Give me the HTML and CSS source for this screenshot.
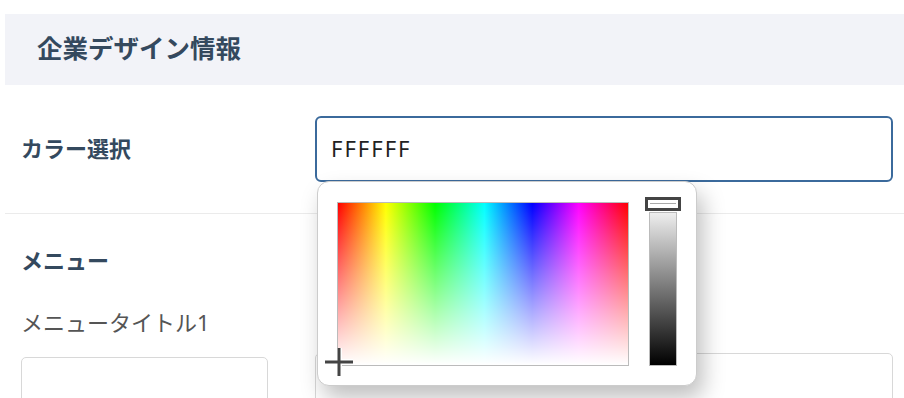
FILE: index.html
```html
<!DOCTYPE html>
<html lang="ja">
<head>
	<meta charset="UTF-8">
	<meta name="viewport" content="width=device-width, initial-scale=1">
	<title>企業デザイン情報</title>
	<link rel="stylesheet" href="styles.css">
</head>
<body>
	<section class="panel">
		<h2 class="panel__title">企業デザイン情報</h2>

		<div class="row">
			<label class="row__label" for="color">カラー選択</label>
			<div class="picker">
				<input class="picker__input" id="color" type="text" value="FFFFFF">

				<div class="picker__pop">
					<div class="picker__area">
						<svg class="picker__cross" width="34" height="34" viewBox="0 0 34 34">
							<path d="M3 17H31M17 3V31" stroke="#fff" stroke-width="6"/>
							<path d="M3 17H31M17 3V31" stroke="#444" stroke-width="3"/>
						</svg>
					</div>
					<div class="picker__slider">
						<div class="picker__handle"></div>
					</div>
				</div>
			</div>
		</div>

		<div class="menu">
			<h3 class="menu__title">メニュー</h3>
			<div class="menu__grid">
				<div class="field">
					<label class="field__label">メニュータイトル1</label>
					<input class="field__input" type="text">
				</div>
				<div class="field field--right">
					<label class="field__label">メニューリンク1</label>
					<input class="field__input" type="text">
				</div>
			</div>
		</div>
	</section>
</body>
</html>
```

FILE: styles.css
```css
body {
	font-family: "Noto Sans", "Noto Sans CJK JP", sans-serif;
	margin: 0px;
	background: #fff;
	color: #34495e;
	overflow: hidden;
}

.panel {
	margin: 14px 0 0 5px;
}
.panel__title {
	margin: 0;
	height: 71px;
	line-height: 69px;
	padding-left: 32px;
	background: #f2f3f8;
	font-size: 25.5px;
	font-weight: bold;
	color: #34495e;
}

.row {
	display: flex;
	align-items: center;
	padding: 31px 11px 31px 16px;
	border-bottom: 1px solid #ebebeb;
}
.row__label {
	width: 294px;
	padding-bottom: 4px;
	font-size: 22px;
	font-weight: bold;
}

.picker {
	position: relative;
	flex-grow: 1;
}
.picker__input {
	display: block;
	box-sizing: border-box;
	width: 100%;
	height: 66px;
	padding: 0 14px 3px 14px;
	border: 2px solid #3b6a9c;
	border-radius: 6px;
	font-family: "Noto Sans", sans-serif;
	font-size: 22px;
	letter-spacing: 2px;
	color: #222;
	outline: none;
}

.picker__pop {
	position: absolute;
	top: 65px;
	left: 2px;
	z-index: 2;
	display: flex;
	gap: 20px;
	box-sizing: border-box;
	width: 380px;
	height: 205px;
	padding: 20px 19px 19px 19px;
	background: #fff;
	border: 1px solid #ccc;
	border-radius: 12px;
	box-shadow: 6px 12px 22px rgba(0, 0, 0, 0.25);
}
.picker__area {
	position: relative;
	width: 292px;
	height: 164px;
	box-sizing: border-box;
	border: 1px solid #bbb;
	background:
		linear-gradient(to bottom, rgba(255, 255, 255, 0), #fff),
		linear-gradient(to right, #f00 0%, #ff0 16.5%, #0f0 33.5%, #0ff 50.5%, #00f 67%, #f0f 83%, #f00 100%);
}
.picker__cross {
	position: absolute;
	left: -16px;
	bottom: -14px;
}
.picker__slider {
	position: relative;
	width: 28px;
	height: 154px;
	margin-top: 10px;
	box-sizing: border-box;
	border: 1px solid #bbb;
	background: linear-gradient(to bottom, #eee, #000);
}
.picker__handle {
	position: absolute;
	top: -16px;
	left: -5px;
	width: 30px;
	height: 8px;
	border: 3px solid #444;
	background: #fff;
}
.picker__handle::after {
	content: "";
	position: absolute;
	left: 2px;
	right: 2px;
	top: 3px;
	border-top: 1px solid #aaa;
}

.menu {
	padding: 31px 11px 0 16px;
}
.menu__title {
	margin: 0;
	font-size: 22px;
	font-weight: bold;
	line-height: 30px;
}
.menu__grid {
	display: grid;
	grid-template-columns: 247px 1fr;
	gap: 47px;
	margin-top: 32px;
}
.field__label {
	display: block;
	font-size: 22px;
	line-height: 30px;
	color: #555;
}
.field__input {
	display: block;
	box-sizing: border-box;
	width: 100%;
	height: 60px;
	margin-top: 20px;
	border: 1px solid #d8d8d8;
	border-radius: 5px;
}
.field--right .field__input {
	margin-top: 16px;
}
```
